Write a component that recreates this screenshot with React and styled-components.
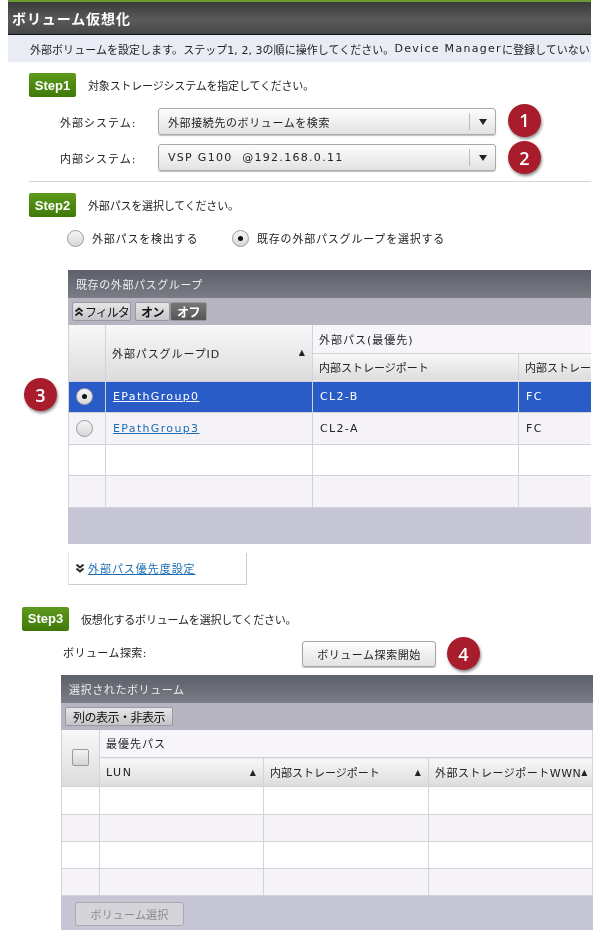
import styled, { createGlobalStyle } from 'styled-components';

const Global = createGlobalStyle`
    html, body { margin: 0; padding: 0; background: #fff; }
    body { font-family: "DejaVu Sans", "Noto Sans CJK JP", sans-serif; font-size: 11px; color: #222; }
`;

// the reference is a slightly soft, scaled screenshot
const Page = styled.div`
    width: 600px;
    height: 930px;
    overflow: hidden;
    filter: blur(0.35px);
`;
const Header = styled.div`
    margin-left: 8px;
    width: 583px;
    height: 35px;
    padding-left: 4px;
    box-sizing: border-box;
    display: flex;
    align-items: center;
    color: #fff;
    font-size: 14px;
    font-weight: bold;
    letter-spacing: 0.9px;
    border-top: 2px solid #6c9a33;
    border-bottom: 1px solid #111;
    background: linear-gradient(#3a3a3a, #5a5a5a 55%, #464646);
`;
const Intro = styled.div`
    margin-left: 8px;
    width: 583px;
    height: 27px;
    padding-left: 22px;
    box-sizing: border-box;
    display: flex;
    align-items: center;
    background: #e9ecf4;
    white-space: pre;
    letter-spacing: 0.04px;
`;
const IntroLatin = styled.span`
    letter-spacing: 1.3px;
`;
const StepRow = styled.div`
    display: flex;
    align-items: center;
    gap: 12px;
    height: 24px;
    margin: ${p => p.$top}px 0 0 ${p => p.$left}px;
`;
const StepBadge = styled.div`
    width: 47px;
    height: 24px;
    display: flex;
    align-items: center;
    justify-content: center;
    border-radius: 2px;
    background: linear-gradient(#5d9a1c, #3f7a08);
    color: #fff;
    font-family: "Liberation Sans", sans-serif;
    font-size: 13px;
    font-weight: bold;
`;
const StepText = styled.div`
    letter-spacing: -0.18px;
`;
const FieldRow = styled.div`
    display: flex;
    align-items: center;
    margin: ${p => p.$top}px 0 0 60px;
    height: 27px;
`;
const FieldLabel = styled.div`
    width: 98px;
    letter-spacing: 1px;
`;
const Select = styled.div`
    width: 338px;
    height: 27px;
    box-sizing: border-box;
    display: flex;
    align-items: center;
    border: 1px solid #a9a9a9;
    border-radius: 3px;
    background: linear-gradient(#fdfdfd, #e2e2e2);
    box-shadow: 0 1px 1px rgb(0 0 0 / 25%);
`;
const SelectValue = styled.div`
    flex: 1;
    padding-left: 9px;
    letter-spacing: ${p => p.$latin ? '1.3px' : '0.6px'};
    white-space: pre;
`;
const SelectArrow = styled.div`
    width: 25px;
    height: 17px;
    border-left: 1px solid #bbb;
    display: flex;
    align-items: center;
    justify-content: center;
    &::after {
        content: "";
        border: 4px solid transparent;
        border-top: 6px solid #222;
        border-bottom: 0;
    }
`;
const Callout = styled.div`
    width: 33px;
    height: 33px;
    flex: none;
    display: flex;
    align-items: center;
    justify-content: center;
    border-radius: 50%;
    background: #a81c2c;
    color: #fff;
    font-family: "Open Sans", sans-serif;
    font-size: 18px;
    font-weight: 600;
    box-shadow: 1px 2px 3px rgb(0 0 0 / 45%);
    margin-left: ${p => p.$left || 0}px;
    margin-top: ${p => p.$top || 0}px;
`;
const Separator = styled.div`
    margin: 10px 0 0 29px;
    width: 562px;
    height: 1px;
    background: #d4d4d4;
`;
const RadioRow = styled.div`
    display: flex;
    align-items: center;
    margin: 12px 0 0 67px;
    height: 18px;
`;
const Radio = styled.span`
    width: 17px;
    height: 17px;
    flex: none;
    box-sizing: border-box;
    border: 1px solid #999;
    border-radius: 50%;
    background: linear-gradient(#f6f6f6, #d8d8d8);
    display: flex;
    align-items: center;
    justify-content: center;
    &::after {
        content: "";
        display: ${p => p.$on ? 'block' : 'none'};
        width: 5px;
        height: 5px;
        border-radius: 50%;
        background: #111;
    }
`;
const RadioText = styled.span`
    width: ${p => p.$width ? `${p.$width}px` : 'auto'};
    margin-left: 8px;
    letter-spacing: 0.8px;
`;
const TableArea = styled.div`
    display: flex;
    align-items: flex-start;
    margin: ${p => p.$top}px 0 0 ${p => p.$left}px;
`;
const Panel = styled.div`
    width: ${p => p.$width}px;
    margin-left: ${p => p.$gap || 0}px;
    flex: none;
    overflow: hidden;
`;
const PanelTitle = styled.div`
    height: 28px;
    padding-left: 8px;
    display: flex;
    align-items: center;
    color: #eee;
    letter-spacing: 0.6px;
    background: linear-gradient(#5c606a, #7a7d86);
`;
const Toolbar = styled.div`
    height: 27px;
    box-sizing: border-box;
    padding: 4px;
    display: flex;
    gap: 4px;
    background: #b6b5c1;
`;
const ToolButton = styled.div`
    width: ${p => p.$width}px;
    height: 19px;
    box-sizing: border-box;
    display: flex;
    align-items: center;
    justify-content: center;
    gap: 1px;
    border: 1px solid #99989f;
    border-radius: 2px;
    background: ${p => p.$active ? 'linear-gradient(#777, #555)' : 'linear-gradient(#e6e6e8, #c6c6ca)'};
    color: ${p => p.$active ? '#fff' : '#111'};
    font-size: 12px;
    font-weight: ${p => p.$bold ? 'bold' : 'normal'};
    letter-spacing: ${p => p.$tight ? '-1px' : '-0.5px'};
    margin-left: ${p => p.$joined ? '-4px' : '0'};
`;
const Grid = styled.table`
    border-collapse: collapse;
    table-layout: fixed;
    width: ${p => p.$width}px;
    background: #fff;
`;
const HeadCell = styled.th`
    height: ${p => p.$height || 28}px;
    padding: 0 6px;
    box-sizing: border-box;
    overflow: hidden;
    white-space: nowrap;
    text-align: left;
    font-weight: normal;
    letter-spacing: ${p => p.$track ?? 0}px;
    border: 1px solid #d2d2da;
    border-top: 0;
    background: ${p => p.$flat ? '#f7f5f9' : 'linear-gradient(#f8f8f8, #dcdcdc)'};
`;
const HeadInner = styled.div`
    display: flex;
    align-items: center;
    justify-content: space-between;
`;
const SortMark = styled.span`
    flex: none;
    font-size: 8px;
    letter-spacing: 0;
    margin-right: ${p => p.$right ?? 1}px;
`;
const BodyRow = styled.tr`
    height: ${p => p.$height}px;
    background: ${p => p.$selected ? '#2a5cc8' : p.$alt ? '#f6f3f8' : '#fff'};
    color: ${p => p.$selected ? '#fff' : '#222'};
`;
const BodyCell = styled.td`
    padding: 0 7px;
    box-sizing: border-box;
    overflow: hidden;
    white-space: nowrap;
    letter-spacing: 1.35px;
    border: 1px solid #d2d2da;
`;
const CenterCell = styled(BodyCell)`
    padding: 0 0 0 7px;
`;
const RowLink = styled.a`
    color: ${p => p.$selected ? '#fff' : '#1a6db5'};
    text-decoration: underline;
`;
const PanelFooter = styled.div`
    height: ${p => p.$height}px;
    box-sizing: border-box;
    padding: 6px 0 0 14px;
    background: #c5c5d5;
`;
const DisclosureBox = styled.div`
    margin: 9px 0 0 68px;
    width: 179px;
    height: 32px;
    box-sizing: border-box;
    padding-left: 6px;
    display: flex;
    align-items: center;
    gap: 3px;
    background: #fff;
    border-right: 1px solid #ccc;
    border-bottom: 1px solid #ccc;
    border-left: 1px solid #e4e4e4;
`;
const DisclosureLink = styled.a`
    color: #1a6db5;
    text-decoration: underline;
    letter-spacing: 0.95px;
`;
const SearchRow = styled.div`
    display: flex;
    align-items: center;
    margin: 7px 0 0 63px;
    height: 33px;
`;
const SearchLabel = styled.div`
    width: 239px;
    letter-spacing: 0.45px;
    margin-top: -4px;
`;
const SearchButton = styled.div`
    width: 134px;
    height: 26px;
    box-sizing: border-box;
    display: flex;
    align-items: center;
    justify-content: center;
    border: 1px solid #a5a5a5;
    border-radius: 3px;
    background: linear-gradient(#fdfdfd, #e2e2e2);
    box-shadow: 0 1px 1px rgb(0 0 0 / 25%);
    letter-spacing: 0.55px;
`;
const CheckBox = styled.span`
    display: block;
    width: 17px;
    height: 17px;
    margin-left: 4px;
    box-sizing: border-box;
    border: 1px solid #999;
    border-radius: 2px;
    background: linear-gradient(#f4f4f4, #d6d6d6);
`;
const DisabledButton = styled.div`
    width: 109px;
    height: 24px;
    box-sizing: border-box;
    display: flex;
    align-items: center;
    justify-content: center;
    border: 1px solid #aaa;
    border-radius: 3px;
    background: #d4d4da;
    color: #8b8b8b;
    letter-spacing: 0.2px;
`;
const ChevronIcon = styled.svg`
    flex: none;
    transform: ${p => p.$up ? 'rotate(180deg)' : 'none'};
`;

function Chevrons({ up }) {
    return (
        <ChevronIcon $up={up} width="10" height="10" viewBox="0 0 10 10" fill="none" stroke="#222" strokeWidth="1.8">
            <path d="M1.5 1.5 5 4.5 8.5 1.5M1.5 5.5 5 8.5 8.5 5.5" />
        </ChevronIcon>
    );
}

const pathRows = [
    { id: 'EPathGroup0', port: 'CL2-B', type: 'FC', selected: true, height: 31 },
    { id: 'EPathGroup3', port: 'CL2-A', type: 'FC', alt: true, height: 32 },
    { height: 31 },
    { alt: true, height: 32 },
];
const volumeRows = [28, 27, 27, 27];

export default function App() {
    return (
        <Page>
            <Global />
            <Header>ボリューム仮想化</Header>
            <Intro>
                外部ボリュームを設定します。ステップ1, 2, 3の順に操作してください。
                <IntroLatin>Device Manager</IntroLatin>
                に登録していない
            </Intro>

            <StepRow $top={11} $left={29}>
                <StepBadge>Step1</StepBadge>
                <StepText>対象ストレージシステムを指定してください。</StepText>
            </StepRow>
            <FieldRow $top={11}>
                <FieldLabel>外部システム:</FieldLabel>
                <Select>
                    <SelectValue>外部接続先のボリュームを検索</SelectValue>
                    <SelectArrow />
                </Select>
                <Callout $left={12} $top={-3}>1</Callout>
            </FieldRow>
            <FieldRow $top={9}>
                <FieldLabel>内部システム:</FieldLabel>
                <Select>
                    <SelectValue $latin>{'VSP G100  @192.168.0.11'}</SelectValue>
                    <SelectArrow />
                </Select>
                <Callout $left={12}>2</Callout>
            </FieldRow>
            <Separator />

            <StepRow $top={11} $left={29}>
                <StepBadge>Step2</StepBadge>
                <StepText>外部パスを選択してください。</StepText>
            </StepRow>
            <RadioRow>
                <Radio />
                <RadioText $width={140}>外部パスを検出する</RadioText>
                <Radio $on />
                <RadioText>既存の外部パスグループを選択する</RadioText>
            </RadioRow>

            <TableArea $top={23} $left={24}>
                <Callout $top={108}>3</Callout>
                <Panel $gap={11} $width={523}>
                    <PanelTitle>既存の外部パスグループ</PanelTitle>
                    <Toolbar>
                        <ToolButton $width={59} $tight><Chevrons up />フィルタ</ToolButton>
                        <ToolButton $width={35} $bold>オン</ToolButton>
                        <ToolButton $width={37} $bold $active $joined>オフ</ToolButton>
                    </Toolbar>
                    <Grid $width={620}>
                        <colgroup>
                            <col width="37" />
                            <col width="207" />
                            <col width="206" />
                            <col width="170" />
                        </colgroup>
                        <thead>
                            <tr>
                                <HeadCell rowSpan={2} />
                                <HeadCell rowSpan={2} $track={0.9}>
                                    <HeadInner>外部パスグループID<SortMark>▲</SortMark></HeadInner>
                                </HeadCell>
                                <HeadCell colSpan={2} $flat $track={1}>外部パス(最優先)</HeadCell>
                            </tr>
                            <tr>
                                <HeadCell>内部ストレージポート</HeadCell>
                                <HeadCell>内部ストレー</HeadCell>
                            </tr>
                        </thead>
                        <tbody>
                            {pathRows.map((row, i) => (
                                <BodyRow key={i} $height={row.height} $selected={row.selected} $alt={row.alt}>
                                    <CenterCell>{row.id && <Radio $on={row.selected} />}</CenterCell>
                                    <BodyCell>{row.id && <RowLink $selected={row.selected}>{row.id}</RowLink>}</BodyCell>
                                    <BodyCell>{row.port}</BodyCell>
                                    <BodyCell>{row.type}</BodyCell>
                                </BodyRow>
                            ))}
                        </tbody>
                    </Grid>
                    <PanelFooter $height={36} />
                </Panel>
            </TableArea>
            <DisclosureBox>
                <Chevrons />
                <DisclosureLink>外部パス優先度設定</DisclosureLink>
            </DisclosureBox>

            <StepRow $top={22} $left={22}>
                <StepBadge>Step3</StepBadge>
                <StepText>仮想化するボリュームを選択してください。</StepText>
            </StepRow>
            <SearchRow>
                <SearchLabel>ボリューム探索:</SearchLabel>
                <SearchButton>ボリューム探索開始</SearchButton>
                <Callout $left={11} $top={-1}>4</Callout>
            </SearchRow>

            <TableArea $top={4} $left={61}>
                <Panel $width={532}>
                    <PanelTitle>選択されたボリューム</PanelTitle>
                    <Toolbar>
                        <ToolButton $width={108}>列の表示・非表示</ToolButton>
                    </Toolbar>
                    <Grid $width={531}>
                        <colgroup>
                            <col width="38" />
                            <col width="164" />
                            <col width="165" />
                            <col width="164" />
                        </colgroup>
                        <thead>
                            <tr>
                                <HeadCell rowSpan={2}><CheckBox /></HeadCell>
                                <HeadCell colSpan={3} $flat $track={1}>最優先パス</HeadCell>
                            </tr>
                            <tr>
                                <HeadCell $height={29} $track={1.5}><HeadInner>LUN<SortMark>▲</SortMark></HeadInner></HeadCell>
                                <HeadCell $height={29}><HeadInner>内部ストレージポート<SortMark>▲</SortMark></HeadInner></HeadCell>
                                <HeadCell $height={29} $track={0.5}><HeadInner>外部ストレージポートWWN<SortMark $right={2}>▲</SortMark></HeadInner></HeadCell>
                            </tr>
                        </thead>
                        <tbody>
                            {volumeRows.map((height, i) => (
                                <BodyRow key={i} $height={height} $alt={i % 2 === 1}>
                                    <BodyCell /><BodyCell /><BodyCell /><BodyCell />
                                </BodyRow>
                            ))}
                        </tbody>
                    </Grid>
                    <PanelFooter $height={34}>
                        <DisabledButton>ボリューム選択</DisabledButton>
                    </PanelFooter>
                </Panel>
            </TableArea>
        </Page>
    );
}
